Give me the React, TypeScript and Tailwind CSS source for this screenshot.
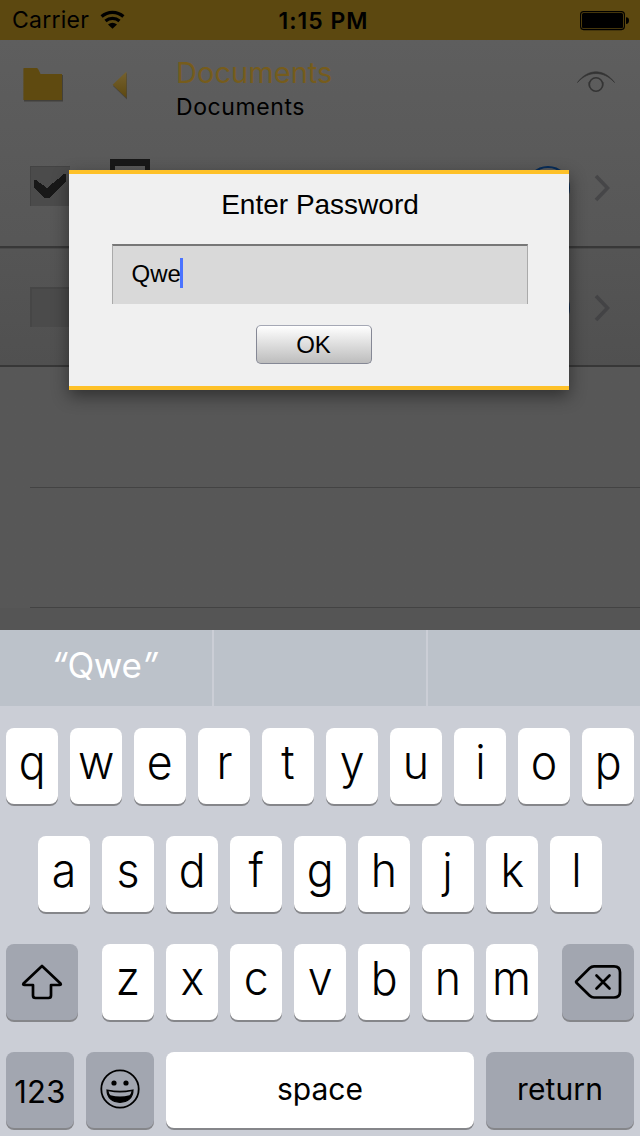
import type { ReactNode } from "react";

function StatusBar() {
  return (
    <div className="grid h-10 grid-cols-3 items-center bg-[#5c4810] text-black">
      <div className="flex items-center pl-3">
        <span className="w-[78px] text-[23px] leading-10 tracking-[0.25px] whitespace-nowrap">Carrier</span>
        <svg className="ml-[10px]" width="26" height="20" viewBox="0 0 26 20" fill="none" stroke="#000" strokeWidth="3.2">
          <path d="M1.6 6.5 A16.2 16.2 0 0 1 23.4 6.5" />
          <path d="M5.5 11 A10.4 10.4 0 0 1 19.5 11" />
          <path d="M12.5 18.8 L8 14.4 Q12.5 10.9 17 14.4 Z" fill="#000" stroke="none" />
        </svg>
      </div>
      <span className="pl-[7px] text-center text-[23px] leading-10 font-semibold tracking-[1px]">
        <span className="relative top-px">1:15 PM</span>
      </span>
      <div className="flex justify-end pr-[10px]">
        <svg width="50" height="20" viewBox="0 0 50 20" className="mt-px">
          <rect x="0.6" y="0.6" width="43.8" height="18" rx="3" fill="none" stroke="#000" strokeWidth="1.1" />
          <rect x="2" y="2" width="41" height="15.2" rx="1.5" />
          <path d="M46 6.3 Q49 6.3 49 9.6 Q49 13 46 13 Z" />
        </svg>
      </div>
    </div>
  );
}

function Header() {
  return (
    <div className="flex h-[116px] items-start">
      <svg className="mt-[26px] ml-[22px]" width="42" height="36" viewBox="0 0 42 36">
        <path d="M2 3 H14.5 L18.5 9 H41 V35.5 H2 Z" fill="#37342d" opacity=".7" />
        <path d="M1.4 2.4 Q1.4 2 2 2 H15 Q16 2 18.5 8 H40 V34 H1.4 Z" fill="#5f4a10" />
      </svg>
      <svg className="mt-[30px] ml-[48px]" width="16" height="30" viewBox="0 0 16 30">
        <defs>
          <linearGradient id="arrow" x1="0" y1="0" x2="0" y2="1">
            <stop offset="0" stopColor="#76622f" />
            <stop offset="1" stopColor="#5d4810" />
          </linearGradient>
        </defs>
        <path d="M15 3 L1 16 L15 29.5 Z" fill="#3d3931" opacity=".7" />
        <path d="M14.5 1.5 V28 L.6 14.8 Z" fill="url(#arrow)" />
      </svg>
      <div className="ml-12 flex w-[400px] flex-col pt-[15px]">
        <span className="text-[29px] leading-9 tracking-[0.05px] text-[#765c1c]">Documents</span>
        <span className="text-[23px] leading-8 tracking-[0.6px] text-black">Documents</span>
      </div>
      <svg className="mt-[29px]" width="40" height="26" viewBox="0 0 40 26" fill="none" stroke="#343434">
        <path d="M1.5 13.5 C12 -.7 28 -.7 38.5 13.5 C28 1.5 12 1.5 1.5 13.5" fill="#343434" strokeWidth=".7" />
        <circle cx="20" cy="15.5" r="6.7" strokeWidth="1.6" />
        <path d="M12.3 13 Q12.3 18 15 20 M27.7 13 Q27.7 18 25 20" strokeWidth=".8" opacity=".6" />
      </svg>
    </div>
  );
}

function Chevron({ color }: { color: string }) {
  return (
    <svg className="mr-[29px] shrink-0" width="17" height="28" viewBox="0 0 17 28" fill="none" stroke={color} strokeWidth="3.6">
      <path d="M2 2 L13.5 14 L2 26" />
    </svg>
  );
}

function Info({ color }: { color: string }) {
  return (
    <svg className="mr-6 ml-auto" width="44" height="44" viewBox="0 0 44 44" fill="none" stroke={color} strokeWidth="2">
      <circle cx="22" cy="22" r="21" />
    </svg>
  );
}

function FileRows() {
  return (
    <>
      <div className="flex h-[92px] items-start border-b-2 border-[#383838]">
        <div className="mt-[10px] ml-[30px] h-10 w-10 border-t border-l border-[#434343] bg-[#4b4b4b]">
          <svg width="39" height="39" viewBox="0 0 39 39" shapeRendering="crispEdges">
            <path d="M3 13 H5 L16 21 L33 7 H35 V14 L18 31 H14 L3 21 Z" fill="#181818" />
          </svg>
        </div>
        <div className="mt-[3px] ml-10 h-12 w-10 border-[5px] border-t-[7px] border-[#181818]" />
        <div className="mt-[10px] flex grow items-center">
          <Info color="#062c59" />
          <Chevron color="#464648" />
        </div>
      </div>
      <div className="flex h-[119px] items-center border-t border-b-2 border-t-[#4a4a4a] border-b-[#373737] bg-linear-to-b from-[#555] to-[#505050] pt-0.5">
        <div className="ml-[30px] h-10 w-10 -translate-y-px border-t-2 border-l-2 border-[#464646] bg-[#4b4b4b]" />
        <Info color="#132c4b" />
        <Chevron color="#434345" />
      </div>
      <div className="ml-[30px] h-[121px] border-b border-[#434343]" />
      <div className="ml-[30px] h-[120px] border-b border-[#434343]" />
    </>
  );
}

function PasswordDialog() {
  return (
    <div className="absolute top-[170px] left-[69px] flex h-[220px] w-[500px] flex-col items-center border-y-4 border-[#fec128] bg-[#f0f0f0] pl-px font-['Liberation_Sans',sans-serif] text-black shadow-[0_6px_16px_rgba(0,0,0,0.45)]">
      <h1 className="mt-[15px] pl-px text-[28px] leading-8">Enter Password</h1>
      <div className="mt-[23px] flex h-[60px] w-[416px] items-center border border-t-2 border-b-0 border-x-[#aaa] border-t-[#777] bg-[#d9d9d9] pb-1 pl-[19px]">
        <span className="pt-0.5 text-[24px] leading-[54px]">Qwe</span>
        <span className="h-[30px] w-[3px] -translate-x-px bg-[#4a73ff]" />
      </div>
      <button className="mt-[21px] mr-3 h-[39px] w-[116px] rounded-[5px] border-[1.5px] border-[#858895] border-t-[#a5a8b5] bg-linear-to-b from-white to-[#bdbdbd] text-[24px] leading-[35px]">
        OK
      </button>
    </div>
  );
}

const shadow = "rounded-[8px] shadow-[0_2px_0_#85868a]";

function LetterKey({ children }: { children: ReactNode }) {
  return (
    <div className={`flex h-[76px] w-[52px] shrink-0 items-center justify-center bg-white pb-[10px] text-[47px] leading-none font-[350] ${shadow}`}>
      <span className="scale-x-95">{children}</span>
    </div>
  );
}

function DarkKey({ width, children }: { width: string; children: ReactNode }) {
  return (
    <div className={`flex h-[76px] shrink-0 items-center justify-center bg-[#a2a6b0] ${width} ${shadow}`}>
      {children}
    </div>
  );
}

function Keyboard() {
  return (
    <div className="h-[506px] bg-[#cbced6] text-black">
      <div className="grid h-[76px] grid-cols-[212px_212px_212px] gap-x-[2px]">
        <div className="bg-[#bcc2ca] pt-[13px] pr-[3px] text-center text-[35px] leading-[44px] tracking-[-0.4px] text-white">
          <span className="italic">“</span>Qwe<span className="italic">”</span>
        </div>
        <div className="bg-[#bcc2ca]" />
        <div className="w-[214px] bg-[#bcc2ca]" />
      </div>
      <div className="flex flex-col gap-8 pt-[22px]">
        <div className="flex justify-center gap-3">
          {[..."qwertyuiop"].map((c) => <LetterKey key={c}>{c}</LetterKey>)}
        </div>
        <div className="flex justify-center gap-3">
          {[..."asdfghjkl"].map((c) => <LetterKey key={c}>{c}</LetterKey>)}
        </div>
        <div className="flex justify-between px-[6px]">
          <DarkKey width="w-[72px]">
            <svg width="42" height="38" viewBox="0 0 42 38" fill="none" stroke="#000" strokeWidth="2.7" strokeLinejoin="round">
              <path d="M21 3 L2.5 20.5 Q1.5 22 3.5 22 H12 V32.5 Q12 35 14.5 35 H27.5 Q30 35 30 32.5 V22 H38.5 Q40.5 22 39.5 20.5 Z" />
            </svg>
          </DarkKey>
          <div className="flex gap-3">
            {[..."zxcvbnm"].map((c) => <LetterKey key={c}>{c}</LetterKey>)}
          </div>
          <DarkKey width="w-[72px]">
            <svg width="48" height="36" viewBox="0 0 48 36" fill="none" stroke="#000" strokeWidth="2.7" strokeLinecap="round" strokeLinejoin="round">
              <path d="M20 2.3 H40 Q46 2.3 46 8.3 V27.5 Q46 33.5 40 33.5 H20 Q17.5 33.5 15.5 31.5 L2.5 18.7 Q1.8 18 2.5 17.2 L15.5 4.3 Q17.5 2.3 20 2.3 Z" />
              <path d="M22.5 11.5 L35.5 24.5 M35.5 11.5 L22.5 24.5" />
            </svg>
          </DarkKey>
        </div>
        <div className="flex gap-3 px-[6px]">
          <DarkKey width="w-[68px]">
            <span className="pt-0.5 text-[31px] leading-none tracking-[0.3px]">123</span>
          </DarkKey>
          <DarkKey width="w-[68px]">
            <svg width="40" height="40" viewBox="0 0 40 40" className="-mt-[2px] mr-px">
              <circle cx="20" cy="20" r="18.7" fill="none" stroke="#000" strokeWidth="1.8" />
              <circle cx="14" cy="14" r="2.6" />
              <circle cx="26" cy="14" r="2.6" />
              <path d="M7 21 Q20 23.5 33 21 C33 29 27.5 33.3 20 33.3 C12.5 33.3 7 29 7 21 Z" stroke="#000" strokeWidth="1.2" />
              <path d="M8.5 22.3 Q20 24.7 31.5 22.3 Q31 25 29.5 26.2 Q20 28.8 10.5 26.2 Q9 25 8.5 22.3 Z" fill="#a2a6b0" />
            </svg>
          </DarkKey>
          <div className={`flex h-[76px] w-[308px] items-center justify-center bg-white pb-0.5 text-[30px] leading-none ${shadow}`}>
            space
          </div>
          <DarkKey width="w-[148px]">
            <span className="pb-0.5 text-[30px] leading-none tracking-[0.1px]">return</span>
          </DarkKey>
        </div>
      </div>
    </div>
  );
}

export default function App() {
  return (
    <main className="relative h-[1136px] w-[640px] overflow-hidden bg-[#555] font-['Inter',sans-serif]">
      <div className="h-[630px] overflow-hidden">
        <StatusBar />
        <div className="bg-linear-to-b from-[#5e5e5e] to-[#575757] to-35%">
          <Header />
          <FileRows />
        </div>
      </div>
      <Keyboard />
      <PasswordDialog />
    </main>
  );
}
